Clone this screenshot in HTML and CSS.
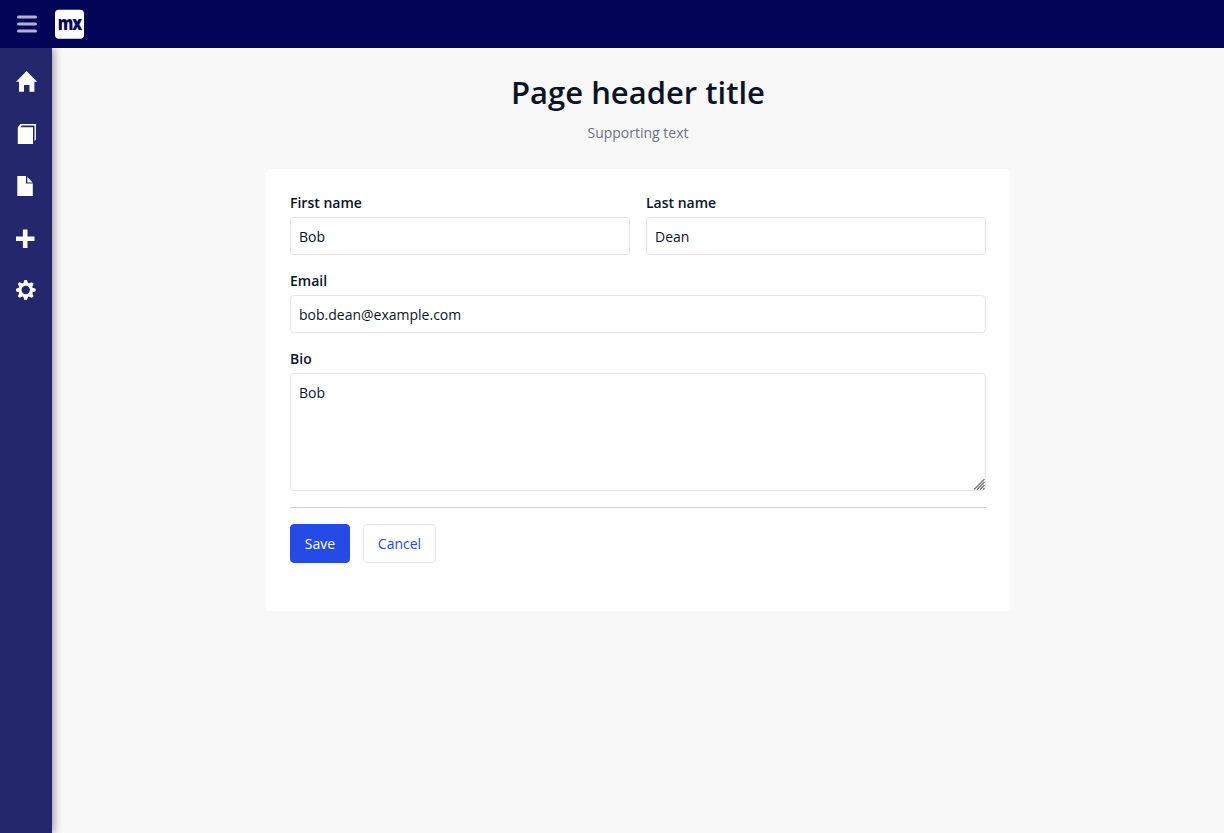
FILE: index.html
```html
<!DOCTYPE html>
<html lang="en">
<head>
<meta charset="utf-8">
<title>Page header title</title>
<link rel="stylesheet" href="styles.css">
</head>
<body>
<div class="app">
  <header class="topbar">
    <button class="menu-toggle" aria-label="Toggle menu">
      <svg width="20" height="18" viewBox="0 0 20 18"><g stroke="#b2b2cd" stroke-width="3" stroke-linecap="round"><path d="M1.5 2h17M1.500 9h17M1.500 16h17"/></g></svg>
    </button>
    <div class="logo"><span class="logo-text">mx</span></div>
  </header>
  <div class="body">
    <nav class="sidebar">
      <a class="nav-item" aria-label="Home"><svg class="icon" viewBox="0 0 22 22"><path d="M10.600 1 21.100 11.700h-2.700V21.800h-4.900v-6.800H8v6.800H3V11.700H.1z"/></svg></a>
      <a class="nav-item" aria-label="Library"><svg class="icon" viewBox="0 0 22 22"><path d="M1.800 5.200 4.600 2H19.900V17.500l-1.400 1.600V3.500H5.700L4.500 5.200H17V22H1.800z"/></svg></a>
      <a class="nav-item" aria-label="Document"><svg class="icon" viewBox="0 0 22 22"><path d="M1.300 2H10v7.600h6.800V22H1.300zM11.300 3.100l5.300 5.300h-5.300z"/></svg></a>
      <a class="nav-item" aria-label="Add"><svg class="icon" viewBox="0 0 22 22"><path d="M6.900 3.400h4.600v7h7v4.500h-7V22H6.900v-7.100H0V10.400h6.900z"/></svg></a>
      <a class="nav-item" aria-label="Settings"><svg class="icon" viewBox="0 0 22 22"><g transform="translate(9.700 12)"><circle r="5.700" fill="none" stroke="#fff" stroke-width="3"/><path id="tooth" d="M-2.600-6.300-1.200-9.900h2.400L2.600-6.300z"/><use href="#tooth" transform="rotate(45)"/><use href="#tooth" transform="rotate(90)"/><use href="#tooth" transform="rotate(135)"/><use href="#tooth" transform="rotate(180)"/><use href="#tooth" transform="rotate(225)"/><use href="#tooth" transform="rotate(270)"/><use href="#tooth" transform="rotate(315)"/></g></svg></a>
    </nav>
    <main class="content">
      <h1 class="title">Page header title</h1>
      <p class="subtitle">Supporting text</p>
      <form class="card">
        <div class="row">
          <label class="field"><span class="label">First name</span><input class="control" type="text" value="Bob"></label>
          <label class="field"><span class="label">Last name</span><input class="control" type="text" value="Dean"></label>
        </div>
        <label class="field"><span class="label">Email</span><input class="control" type="text" value="bob.dean@example.com"></label>
        <label class="field"><span class="label">Bio</span><textarea class="control area">Bob</textarea><svg class="grip" width="11" height="11" viewBox="0 0 11 11"><path d="M0 10.500 10.500 0M3 10.500 10.500 3M6 10.500 10.500 6M9 10.500 10.500 9"/></svg></label>
        <div class="actions">
          <button class="btn primary" type="button">Save</button>
          <button class="btn secondary" type="button">Cancel</button>
        </div>
      </form>
    </main>
  </div>
</div>
</body>
</html>
```
FILE: styles.css
```css
* { box-sizing: border-box; }
body {
  margin: 0;
  font: 14px/20px "Open Sans", sans-serif;
  color: #0a1325;
  background: #f8f8f8;
}
.app { display: flex; flex-direction: column; height: 100vh; }
.topbar {
  display: flex;
  align-items: center;
  gap: 18px;
  height: 48px;
  padding: 0 0 0 17px;
  background: #020557;
}
.menu-toggle { display: flex; padding: 0; border: 0; background: none; }
.logo {
  display: flex;
  justify-content: center;
  width: 29px;
  height: 29px;
  border-radius: 4px;
  background: #fff;
  transform: translateY(-.2px);
}
.logo-text {
  font: 800 20px/26px "Open Sans", sans-serif;
  letter-spacing: -1.4px;
  color: #020557;
  transform: translateX(-.5px) scaleX(.78);
}
.body { display: flex; flex: 1; min-height: 0; }
.sidebar {
  width: 52px;
  padding-top: 8px;
  background: #24276c;
  box-shadow: 2px 0 8px rgba(0, 0, 0, .38);
  clip-path: inset(0 -20px 0 0);
}
.nav-item { display: flex; height: 52px; padding: 14px 0 0 16px; }
.icon { width: 22px; height: 22px; fill: #fff; }
.content {
  flex: 1;
  display: flex;
  flex-direction: column;
  align-items: center;
  padding-top: 23px;
}
.title { margin: 0; font-size: 31px; line-height: 42px; font-weight: 600; }
.subtitle { margin: 10px 0 26px; color: #6c717e; }
.card {
  display: flex;
  flex-direction: column;
  gap: 16px;
  width: 744px;
  height: 442px;
  padding: 24px;
  border-radius: 4px;
  background: #fff;
}
.row { display: flex; gap: 16px; }
.field { position: relative; display: flex; flex: none; flex-direction: column; gap: 4px; }
.row .field { flex: 1; }
.label { font-weight: 600; }
.control {
  width: 100%;
  height: 38px;
  padding: 8px;
  border: 1px solid #e7e7e9;
  border-radius: 4px;
  background: #fff;
  color: #0a1325;
  font: inherit;
  outline: 0;
}
.area { height: 118px; padding-top: 9px; resize: none; }
.grip {
  position: absolute;
  right: 1px;
  bottom: 1px;
  fill: none;
  stroke: #666;
  stroke-width: 1.1;
}
.actions {
  display: flex;
  gap: 13px;
  padding-top: 16px;
  border-top: 1px solid #ced0d3;
}
.btn {
  height: 39px;
  padding: 0;
  border: 1px solid #e7e7e9;
  border-radius: 4px;
  background: #fff;
  color: #264ae5;
  font: inherit;
}
.primary { width: 60px; border-color: #264ae5; background: #264ae5; color: #fff; }
.secondary { width: 73px; }
```
